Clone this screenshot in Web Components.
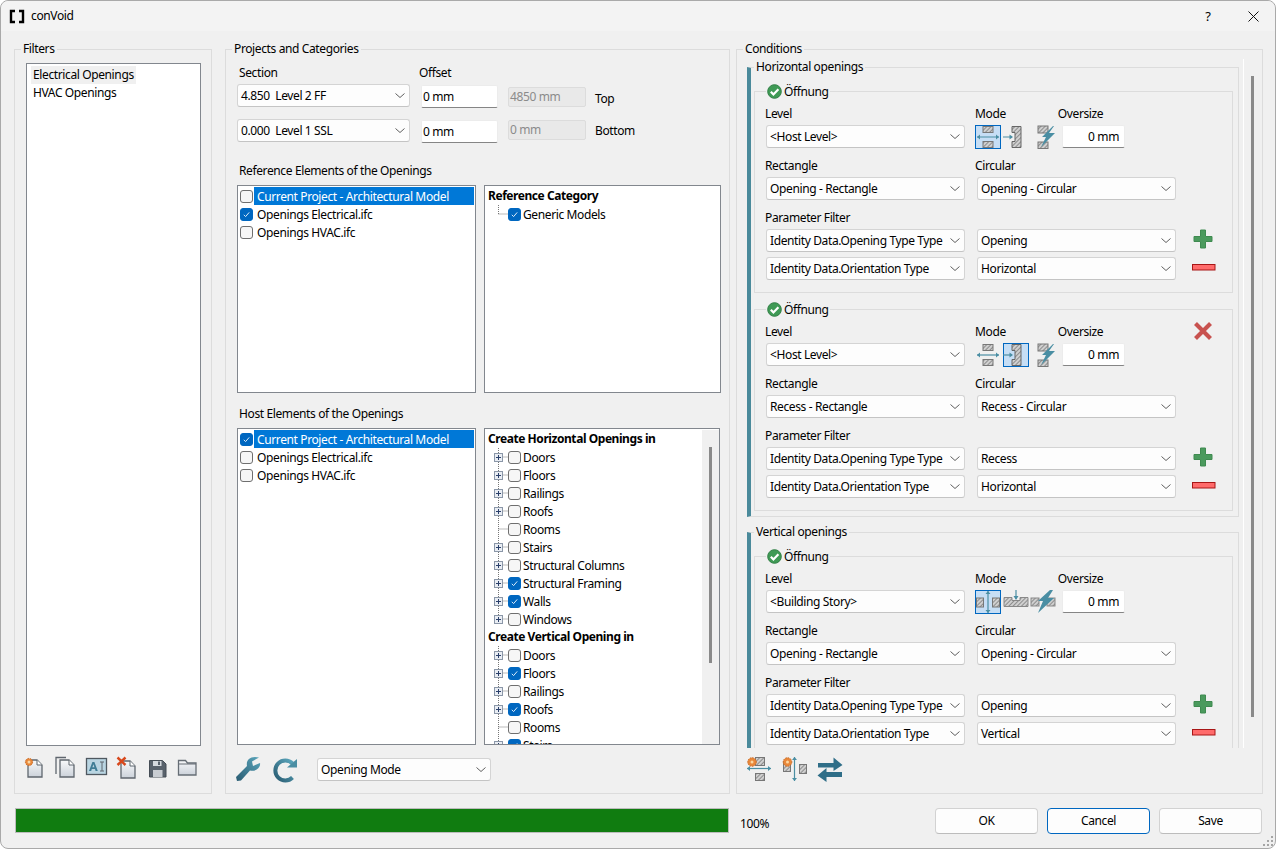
<!DOCTYPE html>
<html><head><meta charset="utf-8"><title>conVoid</title>
<style>
html,body{margin:0;padding:0;background:#fff}
body{font:12px/16px "Noto Sans","Open Sans",sans-serif;letter-spacing:-.38px;color:#000}
</style></head><body>
<script>
const hatch='<defs><pattern id="h" width="3" height="3" patternUnits="userSpaceOnUse" patternTransform="rotate(45)"><rect width="3" height="3" fill="#cfcfcf"/><rect width="1" height="3" fill="#8c8c8c"/></pattern><linearGradient id="pg" x1="0" y1="0" x2="0" y2="1"><stop offset="0" stop-color="#f8f9fb"/><stop offset="1" stop-color="#ccd2da"/></linearGradient><linearGradient id="tg" x1="1" y1="0" x2="0" y2="1"><stop offset="0" stop-color="#5aa5bb"/><stop offset="1" stop-color="#2a5c72"/></linearGradient></defs>';
const T='#4a8ea3';
const harrow=(x1,x2,y)=>`<path d="M${x1} ${y}H${x2}" stroke="${T}" stroke-width="1.2"/><path d="M${x1+3} ${y-2.5}L${x1} ${y}L${x1+3} ${y+2.5}Z M${x2-3} ${y-2.5}L${x2} ${y}L${x2-3} ${y+2.5}Z" fill="${T}"/>`;
const varrow=(y1,y2,x)=>`<path d="M${x} ${y1}V${y2}" stroke="${T}" stroke-width="1.2"/><path d="M${x-2.5} ${y1+3}L${x} ${y1}L${x+2.5} ${y1+3}Z M${x-2.5} ${y2-3}L${x} ${y2}L${x+2.5} ${y2-3}Z" fill="${T}"/>`;
const flower=(x,y,r=4.3)=>`<circle cx="${x}" cy="${y}" r="${r}" fill="#e8873a" stroke="#c96a24" stroke-dasharray="1.5 1"/><circle cx="${x}" cy="${y}" r="1.5" fill="#fbd6a0"/>`;
const page=(x,y)=>`<path d="M${x} ${y}h9l5 5v12h-14z" fill="url(#pg)" stroke="#5f666e" stroke-width="1.3"/><path d="M${x+9} ${y}v5h5" fill="#fff" stroke="#5f666e"/>`;
const icons={
 ok:[15,15,`<circle cx="7.5" cy="7.5" r="6.8" fill="#3f9a55" stroke="#2f7f44"/><path d="M3.8 7.8l2.6 2.6 5-5.2" fill="none" stroke="#fff" stroke-width="2.2"/>`],
 new:[24,24,`${page(4,4)}${flower(5,6,3.6)}`],
 copy:[24,24,`<path d="M2 18V1.5h10" fill="none" stroke="#5f666e" stroke-width="1.3"/>${page(6,4)}`],
 ai:[24,24,`<rect x="1.5" y="2.5" width="20" height="16" fill="#b9d5e2" stroke="#4f5860" stroke-width="1.3"/><path d="M15 6h4M17 6v9M15 15h4" stroke="#5f666e" fill="none"/><path d="M4 15l3.4-9h2l3.4 9h-2.2l-.6-2H6.8l-.6 2zM7.4 11.2h2l-1-3z" fill="#3f7d96"/>`],
 del:[24,24,`${page(6,5)}<path d="M2.5 1.5l8 7.5M10.5 1.5l-8 7.5" stroke="#d8481c" stroke-width="2.4"/>`],
 save:[24,24,`<path d="M3.5 4.5h13l3.5 3.5v13H3.5z" fill="#59626c" stroke="#454d55"/><rect x="7" y="5" width="8.5" height="5" fill="#d5d9de"/><rect x="7" y="14" width="9.5" height="7" fill="#c9cdd2"/><rect x="12" y="5.5" width="2" height="3.5" fill="#59626c"/>`],
 folder:[24,24,`<path d="M2.5 4.5h7l2 2.5h8.5v12H2.5z" fill="url(#pg)" stroke="#666d75" stroke-width="1.3"/><path d="M2.5 8h17.5" stroke="#666d75"/>`],
 wrench:[25,25,`<path d="M0 20L11 9C10 4 13 0 19 0L23 0.5L16 4.5L17 9L24 6C25 11 19 15 14 13.5L5 23.5L1 24Z" fill="url(#tg)"/>`],
 refresh:[25,25,`<path d="M20.5 6.5A10 10 0 1 0 20.5 20.5" fill="none" stroke="url(#tg)" stroke-width="4"/><path d="M15 10.5H25V2z" fill="#4a8ea3"/>`],
 plus:[20,20,`<path d="M7.5 1h5v6.5H19v5h-6.5V19h-5v-6.5H1v-5h6.5z" fill="#4b9a5d" stroke="#3f8a50"/>`],
 minus:[24,7,`<rect x=".5" y=".5" width="22.5" height="5.5" fill="#ff6b6b" stroke="#a81616"/>`],
 x:[20,20,`<path d="M2.5 2.5l15 15M17.5 2.5l-15 15" stroke="#c8524f" stroke-width="4.2"/>`],
 hOpen:[26,24,`<rect x="8" y="1.5" width="10" height="6" fill="url(#h)" stroke="#777"/><rect x="8" y="16.5" width="10" height="6" fill="url(#h)" stroke="#777"/>${harrow(2,24,12)}`],
 hRecess:[26,24,`<path d="M9 1.5h9v21H9v-6h3v-9H9z" fill="url(#h)" stroke="#666"/><path d="M0 12H9" stroke="${T}" stroke-width="1.2"/><path d="M6.5 9.5L10 12l-3.5 2.5z" fill="${T}"/>`],
 hBolt:[26,24,`<rect x="5" y="1" width="10" height="7" fill="url(#h)" stroke="#777"/><rect x="5" y="17" width="10" height="6.5" fill="url(#h)" stroke="#777"/><path d="M20 1L9 12h4L8 22 22 8h-6l5-7z" fill="${T}"/>`],
 vOpen:[26,24,`<rect x="1.5" y="8" width="7" height="9" fill="url(#h)" stroke="#777"/><rect x="17.5" y="8" width="7" height="9" fill="url(#h)" stroke="#777"/>${varrow(1,23,13)}`],
 vRecess:[26,24,`<path d="M1 7.5h8v3h8v-3h8v9H1z" fill="url(#h)" stroke="#888"/><path d="M13 0v9" stroke="${T}" stroke-width="1.2"/><path d="M10.5 6L13 10l2.5-4z" fill="${T}"/>`],
 vBolt:[26,24,`<rect x="1" y="8" width="8" height="8" fill="url(#h)" stroke="#888"/><rect x="17" y="8" width="8" height="8" fill="url(#h)" stroke="#888"/><path d="M20 0L8 11h5l-5 12 16-15h-6l5-8z" fill="${T}"/>`],
 addH:[25,25,`<rect x="8.5" y=".5" width="9" height="8" fill="url(#h)" stroke="#777"/><rect x="8.5" y="16.5" width="9" height="7" fill="url(#h)" stroke="#777"/>${harrow(0,24,11.5)}${flower(5,5)}`],
 addV:[25,25,`<rect x="1.5" y="4.5" width="7" height="10" fill="url(#h)" stroke="#777"/><rect x="17.5" y="7.5" width="7" height="9" fill="url(#h)" stroke="#777"/>${varrow(0,24,12.5)}${flower(5.5,5)}`],
 swap:[26,25,`<path d="M1 6H16.5V0.5L25.5 8L16.5 14V10.5H1Z" fill="#2f6e88"/><path d="M25 15H9.5V11L0.5 18.5L9.5 25V20H25Z" fill="#2f6e88"/>`],
 logo:[14,13,`<path d="M5 1H1v11h4M9 1h4v11H9" fill="none" stroke="#000" stroke-width="2.4"/>`],
 close:[11,11,`<path d="M.5.5l10 10M10.5.5l-10 10" stroke="#111" stroke-width="1"/>`],
 grip:[12,12,`<g fill="#a5a5a5"><rect x="9" y="1" width="2" height="2"/><rect x="5" y="5" width="2" height="2"/><rect x="9" y="5" width="2" height="2"/><rect x="1" y="9" width="2" height="2"/><rect x="5" y="9" width="2" height="2"/><rect x="9" y="9" width="2" height="2"/></g>`],
 chev:[10,5,`<path d="M.5.5L5 4.5 9.5.5" fill="none" stroke="#5f5f5f"/>`],
};
const svg=n=>{const[w,h,b]=icons[n];return `<svg xmlns="http://www.w3.org/2000/svg" width="${w}" height="${h}" viewBox="0 0 ${w} ${h}" style="display:block;overflow:visible">${hatch}${b}</svg>`};
const esc=s=>String(s).replace(/&/g,'&amp;').replace(/</g,'&lt;');
function def(tag,css,render){
  customElements.define(tag,class extends HTMLElement{
    connectedCallback(){ if(this.shadowRoot) return;
      const r=this.attachShadow({mode:'open'});
      r.innerHTML=`<style>${css}</style>`+(typeof render==='function'?render(this):render);
    }
  });
}
def('cv-icon',':host{display:block;flex:none}',e=>svg(e.getAttribute('name')));
def('cv-label',':host{display:block;height:16px;line-height:18px;white-space:nowrap}','<slot></slot>');
def('cv-combo',`:host{box-sizing:border-box;height:23px;background:#fdfdfd;border:1px solid #d4d4d4;border-bottom-color:#c4c4c4;border-radius:3px;display:flex;align-items:center;justify-content:space-between;padding:0 3px 0 3px;white-space:nowrap;overflow:hidden}
span{white-space:pre}svg{margin-right:1px}`,e=>`<span>${esc(e.getAttribute('text'))}</span>${svg('chev')}`);
def('cv-input',`:host{display:block;box-sizing:border-box;height:23px;background:#fff;border:1px solid #ececec;border-bottom:1px solid #858585;border-radius:2px;padding:0 1px;line-height:21px;white-space:pre}
:host([disabled]){background:#e9e9e9;border:1px solid #dcdcdc;color:#8b8b8b;height:20px;line-height:18px}
:host([right]){text-align:right;padding-right:5px}`,'<slot></slot>');
def('cv-group',`:host{display:block;box-sizing:border-box;border:1px solid #dcdcdc}
.t{display:block;width:fit-content;height:16px;line-height:16px;margin:-9px 0 0 6px;padding:0 2px;background:#f0f0f0;white-space:nowrap}`,e=>`<div class="t">${esc(e.getAttribute('title'))}</div><slot></slot>`);
def('cv-section',`:host{display:block;box-sizing:border-box;border:1px solid #dcdcdc;border-left:4px solid #4a8a9b;padding-bottom:5px;width:492px}
.t{display:block;width:fit-content;height:16px;line-height:16px;margin:-9px 0 0 3px;padding:0 2px;background:#f0f0f0;white-space:nowrap}`,e=>`<div class="t">${esc(e.getAttribute('title'))}</div><slot></slot>`);
def('cv-box',`:host{display:block;box-sizing:border-box;background:#fff;border:1px solid #82878e;padding:1px 0;overflow:hidden}`,'<slot></slot>');
def('cv-check',`:host{display:block;flex:none;box-sizing:border-box;width:13px;height:13px;border:1px solid #6f6f6f;border-radius:3px;background:#f6f6f6}
:host([checked]){background:#0067c0;border-color:#0067c0}
svg{display:block;margin:2px}`,e=>e.hasAttribute('checked')?`<svg width="7" height="7" viewBox="0 0 7 7"><path d="M.8 3.8l1.8 1.8L6.2 1.4" fill="none" stroke="#dcebf8" stroke-width="1"/></svg>`:'');
def('cv-list-row',`:host{display:flex;align-items:center;height:18px;padding-left:2px;white-space:nowrap}
.x{margin-right:1px}.l{flex:1;height:18px;line-height:20px;padding-left:3px;margin-right:1px}
:host([selected]) .l{background:#0078d7;color:#fff}`,e=>`<cv-check class="x" ${e.hasAttribute('checked')?'checked':''}></cv-check><div class="l"><slot></slot></div>`);
def('cv-tree-head',`:host{display:block;height:18px;line-height:18px;font-weight:700;padding-left:3px;white-space:nowrap;letter-spacing:-.44px}`,'<slot></slot>');
def('cv-tree-row',`:host{display:flex;align-items:center;height:18px;white-space:nowrap}
svg{display:block;flex:none}.x{margin-right:2px}.n{height:18px;line-height:20px}`,e=>{
  const plus=e.hasAttribute('plus');
  return `<svg width="23" height="18" viewBox="0 0 23 18"><path d="M13.5 0V${e.hasAttribute('end')?9:18}M13.5 9H23" stroke="#777" stroke-dasharray="1 1" fill="none"/>${plus?'<rect x="9.5" y="5.5" width="8" height="8" fill="#e9edf3" stroke="#8b97a8"/><path d="M11 9.5h5M13.5 7v5" stroke="#2a3f6a"/>':''}</svg><cv-check class="x" ${e.hasAttribute('checked')?'checked':''}></cv-check><div class="n"><slot></slot></div>`});
def('cv-mode',`:host{display:flex;flex:none;box-sizing:border-box;width:26px;height:24px;align-items:center;justify-content:center;border:1px solid transparent}
:host([selected]){background:#c6def5;border-color:#0067c0}`,e=>svg(e.getAttribute('name')));
def('cv-button',`:host{display:flex;align-items:center;justify-content:center;box-sizing:border-box;width:103px;height:26px;background:#fdfdfd;border:1px solid #d2d2d2;border-bottom-color:#bcbcbc;border-radius:4px}
:host([primary]){border-color:#0067c0}`,'<slot></slot>');
def('cv-opening',`:host{display:block;box-sizing:border-box;border:1px solid #dcdcdc;margin:0 5px 0 3px;padding:0 0 12px 10px}
.t{display:flex;align-items:center;gap:2px;width:fit-content;height:16px;margin:-9px 0 0 1px;padding:0 1px;background:#f0f0f0;white-space:nowrap}
.t span{line-height:18px;height:16px}
.r{display:grid;grid-template-columns:210px 210px 1fr;align-items:center}
.l{margin-top:9px}.c{margin-top:4px}.c2{margin-top:5px}
cv-combo{width:199px;margin-left:1px}.b cv-combo{margin-left:2px}
.b{min-width:0}.mh{display:flex}.mh cv-label+cv-label{margin-left:52px}
.mb{display:flex;align-items:center;height:23px}.mb cv-mode+cv-mode{margin-left:2px}.mb cv-mode:nth-child(3){margin-left:var(--g,4px)}
.mb cv-input{width:63px;margin-left:var(--ig,3px)}
.k{display:flex;padding-left:8px;align-self:center}.top{margin-top:6px}`,e=>{
  const a=n=>e.getAttribute(n),m=a('modes').split(','),sel=+a('sel');
  return `<div class="t">${svg('ok')}<span>Öffnung</span></div>
  <div class="r top"><cv-label>Level</cv-label><div class="mh"><cv-label>Mode</cv-label><cv-label>Oversize</cv-label></div>${a('remove')!==null?'<div class="k" style="height:16px;align-items:center;padding-left:8px">'+svg('x')+'</div>':'<div></div>'}</div>
  <div class="r c" style="--g:${a('gap')||'4px'};--ig:${a('igap')||'3px'}"><cv-combo text="${esc(a('level')).replace(/"/g,'')}"></cv-combo><div class="mb">${m.map((n,i)=>`<cv-mode name="${n}" ${i===sel?'selected':''}></cv-mode>`).join('')}<cv-input right>0 mm</cv-input></div><div></div></div>
  <div class="r l"><cv-label>Rectangle</cv-label><cv-label>Circular</cv-label><div></div></div>
  <div class="r c"><cv-combo text="${a('rect')}"></cv-combo><div class="b"><cv-combo text="${a('circ')}"></cv-combo></div><div></div></div>
  <div class="r l"><cv-label>Parameter Filter</cv-label><div></div><div></div></div>
  <div class="r c"><cv-combo text="Identity Data.Opening Type Type"></cv-combo><div class="b"><cv-combo text="${a('type')}"></cv-combo></div><div class="k" style="margin-top:-3px">${svg('plus')}</div></div>
  <div class="r c2"><cv-combo text="Identity Data.Orientation Type"></cv-combo><div class="b"><cv-combo text="${a('orient')}"></cv-combo></div><div class="k" style="padding-left:7px;margin-top:-2px">${svg('minus')}</div></div>`});

def('cv-titlebar',`:host{display:flex;align-items:center;height:30px;background:#f3f3f3;flex:none;border-radius:7px 7px 0 0}
.logo{margin-left:9px;margin-right:7px}.s{flex:1}.q{width:12px;text-align:center;margin-right:34px;font-size:13px}.c{margin-right:16px}`,
`<div class="logo">${svg('logo')}</div><span>conVoid</span><div class="s"></div><span class="q">?</span><div class="c">${svg('close')}</div>`);

def('cv-filters',`:host{display:block;width:198px;flex:none}
.p{padding:6px 0 0 11px}cv-box{width:175px;height:683px;padding:2px 0 0 4px}
.i{width:fit-content;height:18px;line-height:18px;padding:0 2px}.i.s{background:#f0f0f0}
.tb{display:flex;gap:6.4px;margin:10px 0 0 -2px}`,
`<cv-group title="Filters" style="height:100%"><div class="p"><cv-box><div class="i s">Electrical Openings</div><div class="i">HVAC Openings</div></cv-box>
<div class="tb"><cv-icon name="new"></cv-icon><cv-icon name="copy"></cv-icon><cv-icon name="ai"></cv-icon><cv-icon name="del"></cv-icon><cv-icon name="save"></cv-icon><cv-icon name="folder"></cv-icon></div></div></cv-group>`);

def('cv-projects',`:host{display:block;width:505px;flex:none;margin-left:13px}
.p{padding:7px 0 0 11px}
.g{display:grid;grid-template-columns:173px 78px 78px auto;column-gap:10px;align-items:start}
.g>*{min-width:0}.h{margin-left:2px}.o{margin-left:-1px}.i{margin:1px 0 0 1px}.d{margin:3px 0 0 0}.s{margin:6px 0 0 -1px}
.d2{margin:1px 0 0 0}.s2{margin:3px 0 0 -1px}.row2{margin-top:11px}.row1{margin-top:4px}
.t{margin:19px 0 7px 2px}.bx{display:flex;gap:8px}.tb{display:flex;align-items:center;margin:12px 0 0 -1px}
.tb cv-combo{width:174px;margin-left:20px}`,
`<cv-group title="Projects and Categories" style="height:100%"><div class="p">
<div class="g"><cv-label class="h">Section</cv-label><cv-label class="o">Offset</cv-label><div></div><div></div></div>
<div class="g row1"><cv-combo text="4.850  Level 2 FF"></cv-combo><cv-input class="i">0 mm</cv-input><cv-input class="d" disabled>4850 mm</cv-input><cv-label class="s">Top</cv-label></div>
<div class="g row2"><cv-combo text="0.000  Level 1 SSL"></cv-combo><cv-input class="i">0 mm</cv-input><cv-input class="d2" disabled>0 mm</cv-input><cv-label class="s2">Bottom</cv-label></div>
<cv-label class="t">Reference Elements of the Openings</cv-label>
<div class="bx"><cv-box style="width:239px;height:208px"><cv-list-row selected>Current Project - Architectural Model</cv-list-row><cv-list-row checked>Openings Electrical.ifc</cv-list-row><cv-list-row>Openings HVAC.ifc</cv-list-row></cv-box>
<cv-box style="width:237px;height:208px"><cv-tree-head>Reference Category</cv-tree-head><cv-tree-row checked end>Generic Models</cv-tree-row></cv-box></div>
<cv-label class="t" style="margin-top:12px">Host Elements of the Openings</cv-label>
<div class="bx"><cv-box style="width:239px;height:317px"><cv-list-row selected checked>Current Project - Architectural Model</cv-list-row><cv-list-row>Openings Electrical.ifc</cv-list-row><cv-list-row>Openings HVAC.ifc</cv-list-row></cv-box>
<cv-host-tree></cv-host-tree></div>
<div class="tb"><cv-icon name="wrench"></cv-icon><div style="width:11px"></div><cv-icon name="refresh"></cv-icon><cv-combo text="Opening Mode"></cv-combo></div>
</div></cv-group>`);

def('cv-host-tree',`:host{display:block;width:236px;height:317px}
cv-box{height:317px;display:flex;padding:0}
.m{flex:1;padding-top:1px;overflow:hidden}
.sb{width:17px;flex:none;background:#f0f0f0;margin:1px 0 0}.th{width:3px;height:216px;background:#8a8a8a;margin:17px 0 0 7px}`,
`<cv-box style="display:flex"><div class="m">
<cv-tree-head>Create Horizontal Openings in</cv-tree-head>
<cv-tree-row plus>Doors</cv-tree-row><cv-tree-row plus>Floors</cv-tree-row><cv-tree-row plus>Railings</cv-tree-row><cv-tree-row plus>Roofs</cv-tree-row><cv-tree-row>Rooms</cv-tree-row><cv-tree-row plus>Stairs</cv-tree-row><cv-tree-row plus>Structural Columns</cv-tree-row><cv-tree-row plus checked>Structural Framing</cv-tree-row><cv-tree-row plus checked>Walls</cv-tree-row><cv-tree-row plus end>Windows</cv-tree-row>
<cv-tree-head>Create Vertical Opening in</cv-tree-head>
<cv-tree-row plus>Doors</cv-tree-row><cv-tree-row plus checked>Floors</cv-tree-row><cv-tree-row plus>Railings</cv-tree-row><cv-tree-row plus checked>Roofs</cv-tree-row><cv-tree-row>Rooms</cv-tree-row><cv-tree-row plus checked>Stairs</cv-tree-row>
</div><div class="sb"><div class="th"></div></div></cv-box>`);

def('cv-conditions',`:host{display:block;width:527px;flex:none;margin-left:6px}
.p{padding:2px 0 0 10px}
.v{display:flex;height:689px}
.c{width:497px;flex:none;box-sizing:border-box;border-right:1px solid #fff;overflow:hidden;padding-top:8px}
.sb{flex:none;width:17px}.th{width:3px;height:641px;background:#8a8a8a;margin:17px 0 0 7px}
cv-section+cv-section{margin-top:15px}
cv-opening{margin-top:16px}cv-opening+cv-opening{margin-top:16px}
.tb{display:flex;gap:10px;margin:9px 0 0 0;align-items:center}`,
`<cv-group title="Conditions" style="height:100%"><div class="p"><div class="v"><div class="c">
<cv-section title="Horizontal openings">
<cv-opening modes="hOpen,hRecess,hBolt" sel="0" level="<Host Level>" rect="Opening - Rectangle" circ="Opening - Circular" type="Opening" orient="Horizontal"></cv-opening>
<cv-opening modes="hOpen,hRecess,hBolt" sel="1" remove level="<Host Level>" rect="Recess - Rectangle" circ="Recess - Circular" type="Recess" orient="Horizontal"></cv-opening>
</cv-section>
<cv-section title="Vertical openings">
<cv-opening modes="vOpen,vRecess,vBolt" sel="0" gap="1px" igap="6px" level="<Building Story>" rect="Opening - Rectangle" circ="Opening - Circular" type="Opening" orient="Vertical"></cv-opening>
</cv-section>
</div><div class="sb"><div class="th"></div></div></div>
<div class="tb"><cv-icon name="addH"></cv-icon><cv-icon name="addV"></cv-icon><cv-icon name="swap"></cv-icon></div></div></cv-group>`);

def('cv-progress',`:host{display:block;box-sizing:border-box;width:714px;height:25px;border:1px solid #bcbcbc;background:#107c10}`,'');
def('cv-app',`:host{display:flex;flex-direction:column;box-sizing:border-box;width:1276px;height:849px;background:#f0f0f0;border:1px solid #a9a9a9;border-radius:8px;position:relative;overflow:hidden}
.m{display:flex;padding:18px 0 0 13px;height:745px;box-sizing:content-box}
.f{display:flex;align-items:flex-start;margin:14px 0 0 14px}
.pc{margin:8px 0 0 11px;width:195px}.bs{display:flex;gap:9px;margin-left:0}
.grip{position:absolute;right:1px;bottom:1px}`,
`<cv-titlebar></cv-titlebar><div class="m"><cv-filters></cv-filters><cv-projects></cv-projects><cv-conditions></cv-conditions></div>
<div class="f"><cv-progress></cv-progress><div class="pc">100%</div><div class="bs"><cv-button>OK</cv-button><cv-button primary>Cancel</cv-button><cv-button>Save</cv-button></div></div>
<div class="grip">${svg('grip')}</div>`);
document.body.appendChild(document.createElement('cv-app'));
</script>
</body></html>
